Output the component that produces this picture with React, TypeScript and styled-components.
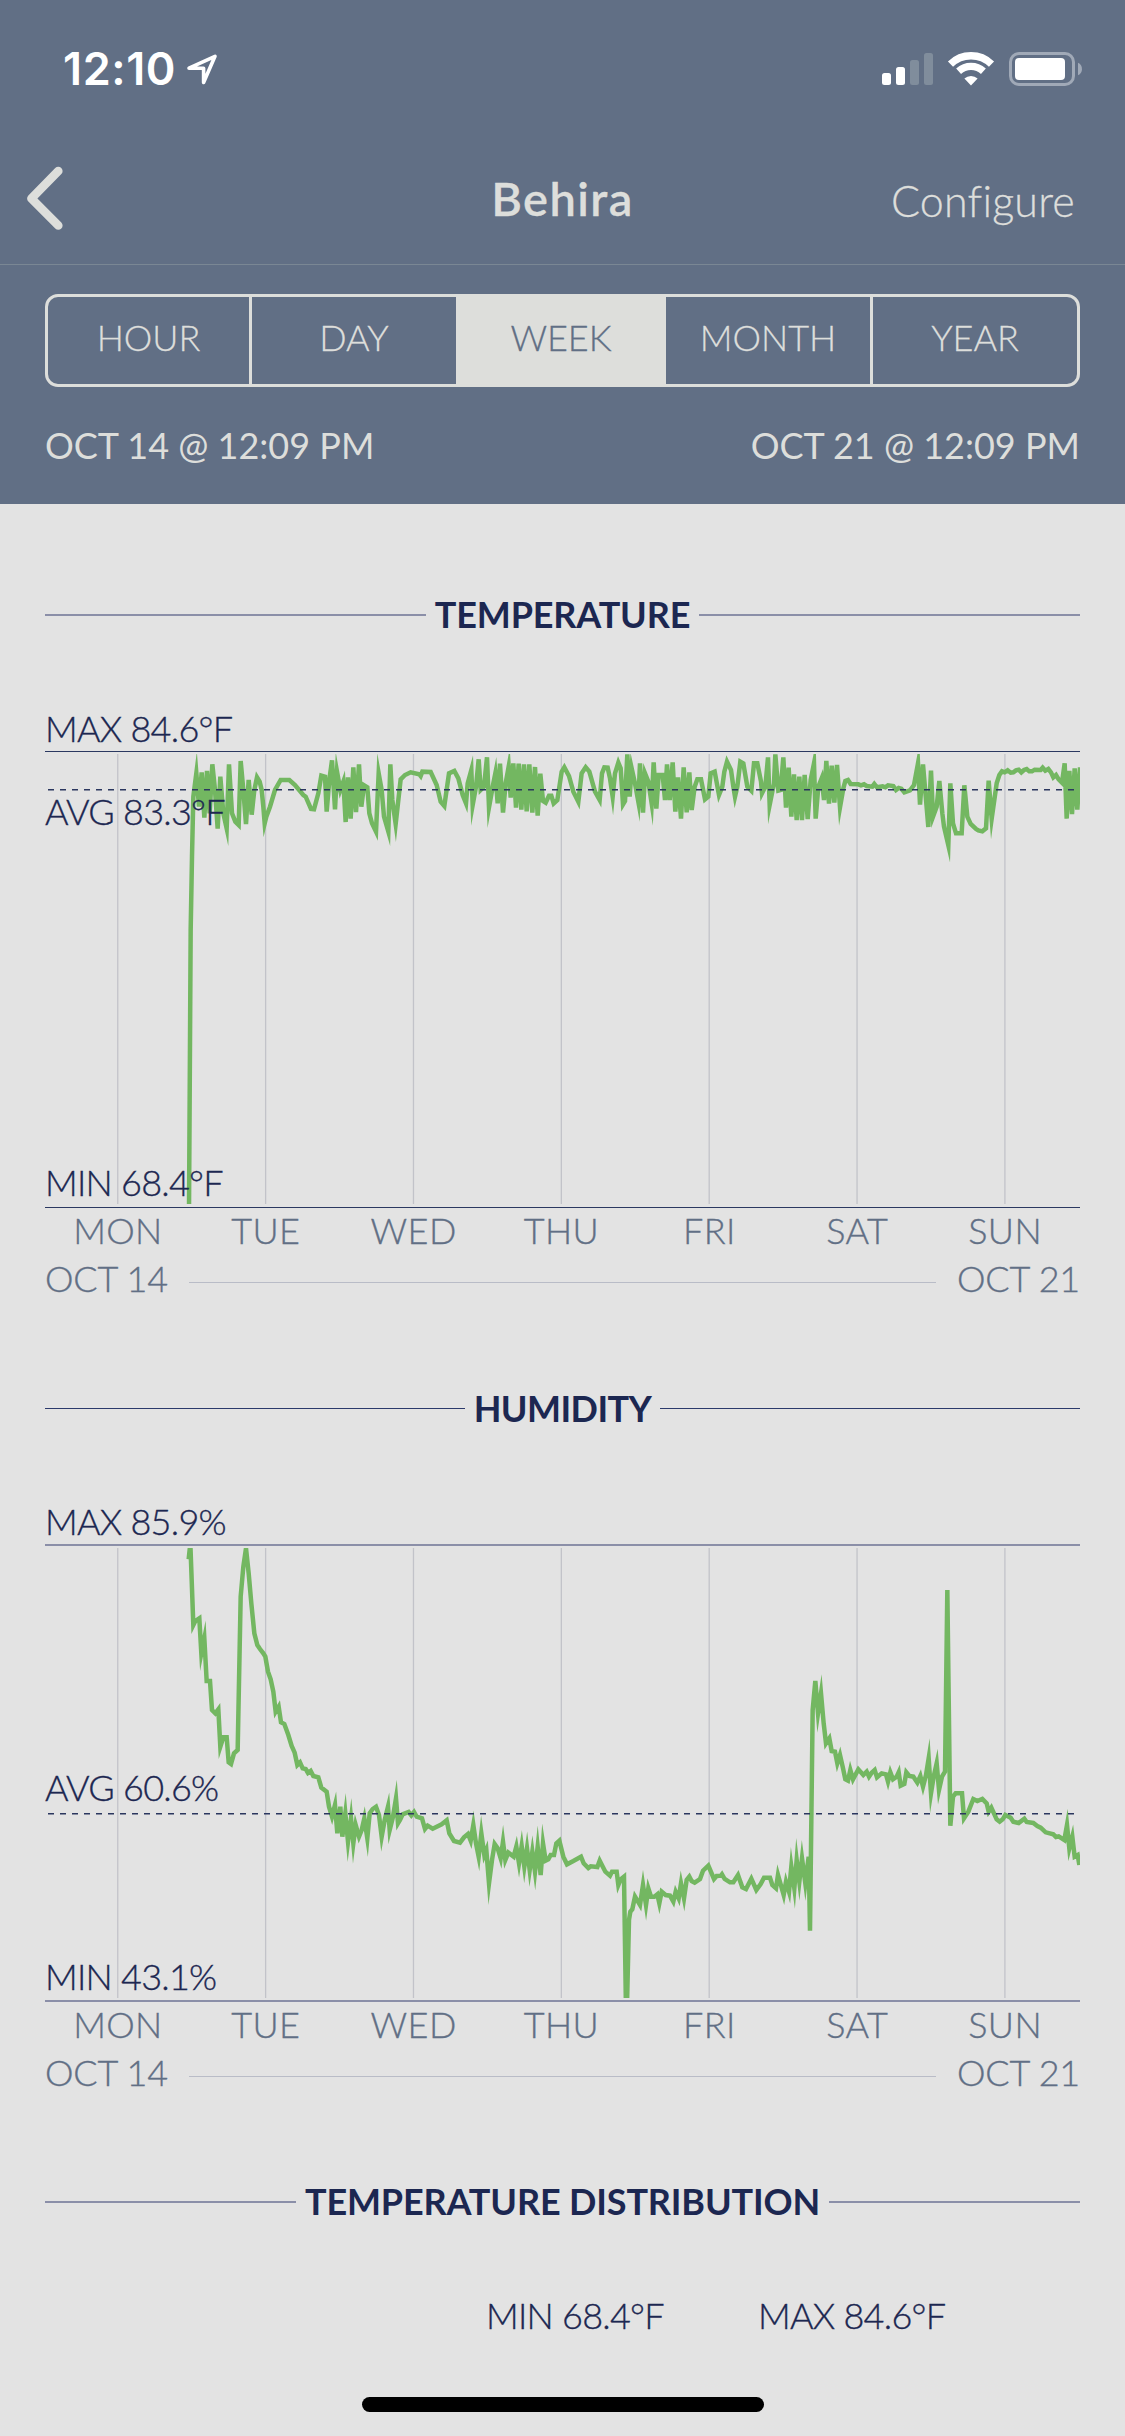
import React from 'react';
import styled, { createGlobalStyle } from 'styled-components';

const color = {
  slate: '#616f85',
  chrome: '#dddedb',
  paper: '#e3e3e3',
  navy: '#1c2751',
  green: '#73b761',
};

const GlobalStyle = createGlobalStyle`
  * { box-sizing: border-box; }
  body {
    margin: 0;
    background: ${color.paper};
    font-family: Lato, "Open Sans", sans-serif;
  }
`;

const Screen = styled.div`
  width: 1125px;
  height: 2436px;
  overflow: hidden;
  display: flex;
  flex-direction: column;
  background: ${color.paper};
`;

const Header = styled.header`
  height: 504px;
  background: ${color.slate};
  color: ${color.chrome};
`;

/* ---------- status bar ---------- */

const StatusBar = styled.div`
  height: 132px;
  padding: 43px 43px 0 63px;
  display: flex;
  justify-content: space-between;
  align-items: flex-start;
`;

const StatusGroup = styled.div`
  display: flex;
  align-items: center;
  height: 52px;
`;

const Clock = styled.span`
  font: 600 45px/52px Inter, sans-serif;
  letter-spacing: 0.6px;
  color: #fff;
  margin-right: 11px;
`;

const StatusIcon = styled.svg<{ $gap?: number }>`
  display: block;
  flex: none;
  overflow: visible;
  margin-left: ${(p) => p.$gap ?? 0}px;
`;

/* ---------- navigation ---------- */

const NavBar = styled.nav`
  height: 133px;
  padding: 0 50px 0 26px;
  display: grid;
  grid-template-columns: 1fr auto 1fr;
  border-bottom: 1px solid #7a8794;
`;

const Back = styled.div`
  padding-top: 34px;
`;

const NavTitle = styled.h1`
  margin: 38px 0 0 24px;
  font-size: 47px;
  line-height: 56px;
  font-weight: 600;
  letter-spacing: 1.4px;
  -webkit-text-stroke: 0.3px currentColor;
`;

const Configure = styled.span`
  margin-top: 41px;
  justify-self: end;
  font-size: 43px;
  line-height: 56px;
  font-weight: 300;
  letter-spacing: 0.2px;
  font-variant-ligatures: none;
  -webkit-text-stroke: 0.3px currentColor;
`;

/* ---------- range picker ---------- */

const Segments = styled.div`
  margin: 29px 45px 0;
  height: 93px;
  display: grid;
  grid-template-columns: 204px repeat(3, 207px) 204px;
  border: 3px solid ${color.chrome};
  border-radius: 13px;
  overflow: hidden;
`;

const Segment = styled.div<{ $active?: boolean }>`
  display: flex;
  align-items: center;
  justify-content: center;
  padding-bottom: 8px;
  font-size: 36px;
  line-height: 36px;
  font-weight: 300;
  -webkit-text-stroke: 0.3px currentColor;
  color: ${(p) => (p.$active ? color.slate : color.chrome)};
  background: ${(p) => (p.$active ? color.chrome : 'transparent')};
  border-right: 3px solid ${color.chrome};
  &:last-child { border-right: 0; }
`;

const RangeRow = styled.div`
  margin: 40px 45px 0;
  display: flex;
  justify-content: space-between;
  font-size: 36px;
  line-height: 36px;
  font-weight: 400;
`;

/* ---------- sections ---------- */

const Content = styled.main`
  padding: 92px 45px 0;
  display: flex;
  flex-direction: column;
`;

const Section = styled.section<{ $after: number }>`
  display: flex;
  flex-direction: column;
  margin-bottom: ${(p) => p.$after}px;
`;

const Heading = styled.div<{ $gap: number; $thin?: boolean }>`
  height: 36px;
  margin-bottom: ${(p) => p.$gap}px;
  display: flex;
  align-items: center;
  gap: 9px;
  &::before,
  &::after {
    content: '';
    flex: 1;
    height: ${(p) => (p.$thin ? 1 : 2)}px;
    margin-top: ${(p) => (p.$thin ? 1 : 2)}px;
    background: ${(p) => (p.$thin ? '#2c3a6b' : '#8b8fa8')};
  }
`;

const HeadingText = styled.h2<{ $tracking?: number }>`
  margin: 0;
  font-size: 36px;
  line-height: 36px;
  font-weight: 700;
  letter-spacing: ${(p) => p.$tracking ?? -0.15}px;
  color: ${color.navy};
`;

const Reading = styled.div`
  height: 36px;
  font-size: 36px;
  line-height: 36px;
  font-weight: 300;
  letter-spacing: -0.75px;
  white-space: pre;
  color: ${color.navy};
  -webkit-text-stroke: 0.35px currentColor;
`;

const PlotFrame = styled.div`
  position: relative;
  margin: 5px 0 4px;
`;

const PlotSvg = styled.svg`
  display: block;
`;

const PlotReading = styled(Reading)<{ $top: number }>`
  position: absolute;
  left: 0;
  top: ${(p) => p.$top}px;
`;

const Days = styled.div`
  height: 36px;
  margin: 0 1px 12px -1px;
  display: grid;
  grid-template-columns: repeat(7, 1fr);
  text-align: center;
  font-size: 36px;
  line-height: 36px;
  font-weight: 300;
  letter-spacing: 0.4px;
  color: ${color.slate};
  -webkit-text-stroke: 0.35px currentColor;
`;

const Span = styled.div`
  height: 36px;
  display: flex;
  align-items: center;
  gap: 21px;
  font-size: 36px;
  line-height: 36px;
  font-weight: 300;
  letter-spacing: -0.2px;
  color: ${color.slate};
  -webkit-text-stroke: 0.35px currentColor;
  &::before {
    content: '';
    order: 1;
    flex: 1;
    height: 1px;
    margin-top: 8px;
    background: #b9bcc7;
  }
  & > :last-child { order: 2; }
`;

const Extremes = styled.div`
  display: grid;
  grid-template-columns: 272px auto;
  justify-content: start;
  margin-left: 441px;
`;

const HomeIndicator = styled.div`
  width: 402px;
  height: 15px;
  margin: 64px auto 0;
  border-radius: 8px;
  background: #000;
`;

/* ---------- chart data ---------- */

/* Samples are kept in device units (three per px) around each block's origin. */
type Block = { x: number; y: number; samples: string };

const toPoints = (blocks: Block[]) =>
  blocks
    .flatMap((b) =>
      b.samples
        .trim()
        .split(/\s+/)
        .map((s) => {
          const [x, y] = s.split(',').map(Number);
          return `${(b.x + x / 3).toFixed(2)},${(b.y + y / 3).toFixed(2)}`;
        }),
    )
    .join(' ');

const temperature: Block[] = [
  {
    x: 30,
    y: 690,
    samples: `477,1560 482,720 486,500 490,320 499,250 507,350 515,247 523,383 531,243 539,370
      547,223 555,300 563,416 571,260 580,370 590,415 597,223 606,370 616,395 626,405 632,213
      640,300 648,402 656,270 665,374 673,300 681,262 689,275 695,300 700,350 704,400 709,380
      720,350 735,300 752,270 778,270 795,285 820,315 827,320 843,357 852,358 865,310 874,257
      885,260 890,365 898,270 906,211 915,358 921,245 931,300 940,275 947,396 954,262 962,386
      970,232 978,366 987,223 994,350 1002,286 1012,292 1018,370 1026,400 1038,425 1046,250
      1055,300 1062,380 1075,425 1081,223 1087,330`,
  },
  {
    x: 390,
    y: 720,
    samples: `17,312 32,178 45,165 62,157 88,163 92,168 97,155 122,156 140,195 152,245 163,258
      177,160 193,153 205,175 218,225 228,250 233,190 244,150 248,255 258,200 266,118 272,210
      282,200 291,112 297,262 310,190 316,160 323,250 330,131 339,278 347,190 356,140 362,233
      370,130 378,263 386,131 394,269 402,133 410,274 418,133 427,278 435,141 443,287 451,161
      459,243 467,248 477,227 484,227 491,250 502,240 515,155 523,142 537,168 550,215 565,245
      575,160 587,142 598,155 615,215 629,240 636,160 643,142 653,143 660,175 668,230 675,160
      685,128 692,145 699,253 705,243 712,103 719,230 725,145 735,190 745,245 750,130 759,278
      765,160 775,185 785,250 791,127 799,266 806,165 818,165 825,240 831,133 839,240 848,127
      856,275 864,172 873,296 881,142 890,277 898,157 905,270 914,200 922,178 933,178 945,238
      955,230 962,160 974,155 987,225 997,200 1003,155 1011,125`,
  },
  {
    x: 730,
    y: 720,
    samples: `3,150 10,200 15,230 22,200 31,125 40,130 52,200 64,212 72,130 82,130 93,185 96,220
      106,200 114,112 119,255 132,190 136,103 145,212 152,210 160,112 168,263 176,143 184,290
      192,163 200,300 208,170 216,300 224,165 233,297 242,180 252,130 257,296 265,200 275,175
      282,240 289,123 297,251 305,137 313,248 321,135 330,262 340,205 346,183 354,180 362,192
      385,193 393,196 402,193 410,198 427,200 433,192 441,202 458,199 466,202 474,196 490,198
      498,210 506,204 514,206 523,217 540,211 552,195 564,130 570,254 579,133 595,321 603,152
      609,290 620,260 628,183 637,280 642,320 655,376 661,190 669,310 678,340 695,340 703,196
      712,290 722,312 738,327 745,331 757,334 768,325 776,182 785,296 793,240 800,190 808,165
      816,154 824,157 833,151 842,158 850,157 858,151 866,149 874,157 882,150 890,147 898,154
      906,154 914,149 932,150 938,143 946,152 955,147 963,157 970,172 978,165 986,178 996,188
      1004,130 1010,296 1018,153 1026,282 1034,145 1042,269 1050,142`,
  },
];

const humidity: Block[] = [
  {
    x: 30,
    y: 1490,
    samples: `476,208 481,160 490,405 496,393 508,385 514,490 523,445 530,573 540,573 546,660
      556,670 565,658 571,770 580,742 590,742 596,817 603,822 612,790 623,780 632,320 640,230
      648,175 656,250 664,340 673,430 682,465 690,477 700,490 706,500 714,545 722,568 730,605
      737,665 746,650 753,697 763,702 775,735 785,768 794,788 802,825 810,817 818,835 827,837
      834,849 842,843 850,858 865,862 874,893 890,905 897,950 906,980 915,945 922,1030 931,950
      937,1040 946,970 954,1055 963,985 970,1060 977,1005 987,1040 995,1020 1003,985 1012,1045
      1019,970 1028,957 1038,950 1047,975 1055,1040 1064,990 1074,950 1079,1020 1089,980
      1098,925 1104,1000`,
  },
  {
    x: 400,
    y: 1780,
    samples: `0,120 8,103 26,96 34,106 42,96 50,110 66,115 75,147 83,137 98,146 125,133 140,121
      148,160 162,183 180,188 192,172 204,162 212,182 220,135 228,190 236,230 244,160 253,225
      259,210 267,310 276,240 284,192 293,205 302,235 309,185 316,240 325,218 341,230 349,200
      357,250 365,198 373,260 381,205 389,270 397,215 405,275 413,200 422,285 429,190 437,242
      445,238 452,225 462,225 469,190 478,182 490,230 501,253 520,243 543,230 551,250 565,264
      572,259 592,261 599,242 616,275 630,287 636,275 650,275 655,315 662,298 672,290 679,760
      687,420 691,395 697,388 705,350 720,375 729,315 738,375 745,325 753,350 763,350 772,343
      778,370 785,335 797,345 810,347 820,365 827,335 836,355 843,310 852,355 860,300 868,290
      875,303 884,308 900,297 909,272 925,257 942,297 950,288 963,287 966,283 974,297 990,307
      1000,307 1014,285 1027,322 1038,327 1054,296 1069,330 1082,312 1092,293 1110,293 1117,315
      1128,325 1134,285 1151,345 1158,305 1167,335 1174,260 1183,325 1190,240 1198,305 1206,235
      1216,310 1226,230`,
  },
  {
    x: 780,
    y: 1560,
    samples: `90,1112 98,450 106,363 114,460 123,400 131,490 138,550 148,535 155,573 165,575
      172,610 180,585 188,620 196,658 204,662 211,630 219,658 235,628 250,645 260,635 267,650
      275,638 284,630 291,652 305,640 318,643 324,665 331,637 339,658 350,650 356,637 362,677
      373,672 379,637 388,648 400,650 412,668 421,648 429,680 438,645 446,595 453,700 461,650
      470,610 477,690 486,650 495,635 502,90 511,797 519,710 527,700 546,700 552,775 565,755
      580,717 592,723 607,717 620,730 626,755 634,743 650,778 659,785 668,778 676,765 692,773
      700,785 716,789 733,776 740,786 760,789 772,798 782,803 797,817 820,823 828,831 836,829
      853,840 861,795 868,865 877,830 884,890 893,885 898,915`,
  },
];

/* ---------- chart ---------- */

interface ChartProps {
  id: string;
  top: number;
  height: number;
  rule: 1 | 2;
  ruleColor: string;
  average: number;
  series: Block[];
}

const Plot = ({ id, top, height, rule, ruleColor, average, series }: ChartProps) => {
  const bottom = top + height;
  const innerTop = top + (rule === 1 ? 3 : 4);
  const innerBottom = bottom - 4;
  return (
    <PlotSvg width={1035} height={height} viewBox={`45 ${top} 1035 ${height}`}>
      <clipPath id={id}>
        <rect x={45} y={innerTop} width={1035} height={innerBottom - innerTop} />
      </clipPath>
      {Array.from({ length: 7 }, (_, i) => (
        <rect
          key={i}
          x={117.1 + i * 147.86}
          y={innerTop}
          width={1.3}
          height={innerBottom - innerTop}
          fill="#c2c3c9"
        />
      ))}
      <rect x={45} y={top} width={1035} height={rule} fill={ruleColor} />
      <rect x={45} y={bottom - rule} width={1035} height={rule} fill={ruleColor} />
      <polyline
        points={toPoints(series)}
        clipPath={`url(#${id})`}
        fill="none"
        stroke={color.green}
        strokeWidth={4.5}
        strokeMiterlimit={10}
      />
      <line
        x1={48}
        x2={1075}
        y1={average}
        y2={average}
        stroke="#2b375f"
        strokeWidth={1.6}
        strokeDasharray="6 6"
      />
    </PlotSvg>
  );
};

const DAYS = ['MON', 'TUE', 'WED', 'THU', 'FRI', 'SAT', 'SUN'];

const Axis = () => (
  <>
    <Days>
      {DAYS.map((d) => (
        <span key={d}>{d}</span>
      ))}
    </Days>
    <Span>
      <span>OCT 14</span>
      <span>OCT 21</span>
    </Span>
  </>
);

/* ---------- status icons ---------- */

const LocationArrow = () => (
  <StatusIcon width={30} height={31} viewBox="0 0 30 31">
    <path
      d="M2 14.2 L28 2.3 L16.6 28.5 V14.3 Z"
      fill="none"
      stroke="#fff"
      strokeWidth={3.6}
      strokeLinejoin="round"
    />
  </StatusIcon>
);

const Signal = () => (
  <StatusIcon width={51} height={34} viewBox="0 0 51 34">
    {[12, 18, 25, 32].map((h, i) => (
      <rect
        key={h}
        x={i * 14}
        y={33 - h}
        width={9}
        height={h}
        rx={2.5}
        fill={i < 2 ? '#fff' : '#808d9c'}
      />
    ))}
  </StatusIcon>
);

const Wifi = () => (
  <StatusIcon $gap={15} width={46} height={34} viewBox="-23 -33 46 34">
    <g fill="none" stroke="#fff">
      <path d="M-20.5 -20.9 A29.3 29.3 0 0 1 20.5 -20.9" strokeWidth={7.3} />
      <path d="M-12.4 -13.8 A18.5 18.5 0 0 1 12.4 -13.8" strokeWidth={7.3} />
    </g>
    <path d="M0 0.5 L-6.6 -6.4 A9.6 9.6 0 0 1 6.6 -6.4 Z" fill="#fff" />
  </StatusIcon>
);

const Battery = () => (
  <StatusIcon $gap={15} width={73} height={34} viewBox="0 0 73 34">
    <rect x={1.5} y={1.5} width={63} height={31} rx={8.5} fill="none" stroke="#a0a9b7" strokeWidth={3} />
    <rect x={6} y={6} width={50} height={22} rx={4} fill="#fff" />
    <path d="M69 10.8 C74.3 12.8 74.3 21.2 69 23.2 Z" fill="#a0a9b7" />
  </StatusIcon>
);

export default function App() {
  return (
    <Screen>
      <GlobalStyle />
      <Header>
        <StatusBar>
          <StatusGroup>
            <Clock>12:10</Clock>
            <LocationArrow />
          </StatusGroup>
          <StatusGroup>
            <Signal />
            <Wifi />
            <Battery />
          </StatusGroup>
        </StatusBar>
        <NavBar>
          <Back>
            <StatusIcon width={38} height={64} viewBox="0 0 38 64">
              <path
                d="M32.3 5 L5.4 32.5 L32.3 59.5"
                fill="none"
                stroke={color.chrome}
                strokeWidth={8.6}
                strokeLinecap="round"
                strokeLinejoin="round"
              />
            </StatusIcon>
          </Back>
          <NavTitle>Behira</NavTitle>
          <Configure>Configure</Configure>
        </NavBar>
        <Segments>
          {['HOUR', 'DAY', 'WEEK', 'MONTH', 'YEAR'].map((s) => (
            <Segment key={s} $active={s === 'WEEK'}>
              {s}
            </Segment>
          ))}
        </Segments>
        <RangeRow>
          <span>OCT 14 @ 12:09 PM</span>
          <span>OCT 21 @ 12:09 PM</span>
        </RangeRow>
      </Header>

      <Content>
        <Section $after={94}>
          <Heading $gap={78}>
            <HeadingText>TEMPERATURE</HeadingText>
          </Heading>
          <Reading>MAX 84.6°F</Reading>
          <PlotFrame>
            <Plot
              id="temperature-area"
              top={751}
              height={457}
              rule={1}
              ruleColor="#2b3961"
              average={789.8}
              series={temperature}
            />
            <PlotReading $top={42}>AVG 83.3°F</PlotReading>
            <PlotReading $top={413}>MIN 68.4°F</PlotReading>
          </PlotFrame>
          <Axis />
        </Section>

        <Section $after={93}>
          <Heading $gap={77} $thin>
            <HeadingText $tracking={-0.55}>HUMIDITY</HeadingText>
          </Heading>
          <Reading>MAX 85.9%</Reading>
          <PlotFrame>
            <Plot
              id="humidity-area"
              top={1544}
              height={458}
              rule={2}
              ruleColor="#8b8fa8"
              average={1813.7}
              series={humidity}
            />
            <PlotReading $top={225}>AVG 60.6%</PlotReading>
            <PlotReading $top={414}>MIN 43.1%</PlotReading>
          </PlotFrame>
          <Axis />
        </Section>

        <Section $after={0}>
          <Heading $gap={78}>
            <HeadingText>TEMPERATURE DISTRIBUTION</HeadingText>
          </Heading>
          <Extremes>
            <Reading>MIN 68.4°F</Reading>
            <Reading>MAX 84.6°F</Reading>
          </Extremes>
        </Section>
        <HomeIndicator />
      </Content>
    </Screen>
  );
}
